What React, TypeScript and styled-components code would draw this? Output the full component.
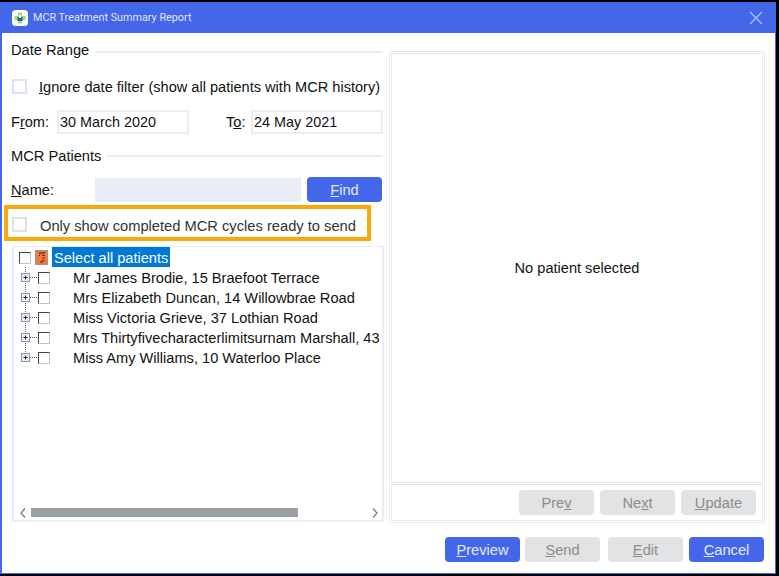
import * as React from 'react'
import styled, { createGlobalStyle } from 'styled-components'

const GlobalStyle = createGlobalStyle`
  html, body {
    margin: 0;
    padding: 0;
    background: #000;
  }
  * {
    box-sizing: border-box;
  }
`

const BLUE = '#4467ea'
const FIELD_LINE = '#e8ecf6'
const PANEL_LINE = '#ebebeb'

const Screen = styled.div`
  width: 779px;
  height: 576px;
  padding: 2px 3px 2px 0;
  background: #000;
  font-family: 'Liberation Sans', Arial, sans-serif;
  font-size: 14.58px;
  color: #111;
`

const Dialog = styled.div`
  width: 776px;
  height: 572px;
  display: flex;
  flex-direction: column;
  background: #fff;
  border: solid ${BLUE};
  border-width: 0 1px 1px 2px;
`

const TitleBar = styled.header`
  height: 31px;
  flex: none;
  display: flex;
  align-items: center;
  gap: 5px;
  padding: 0 13px 0 10px;
  margin-right: -1px;
  background: ${BLUE};
  color: #dfe6fd;
  font-family: Roboto, sans-serif;
  font-size: 10.8px;

  > span {
    flex: 1;
  }
`

const Body = styled.div`
  flex: 1;
  min-height: 0;
  display: grid;
  grid-template-columns: 372px 376px;
  grid-template-rows: 490px 1fr;
  column-gap: 5px;
  padding-left: 10px;
`

const LeftColumn = styled.div`
  display: flex;
  flex-direction: column;
  min-width: 0;
`

const Legend = styled.div<{ $top: number; $line: number }>`
  height: 18px;
  margin-top: ${(p) => p.$top}px;
  margin-left: -1px;
  display: flex;
  align-items: center;
  gap: 6px;
  font-size: 14.67px;

  &::after {
    content: '';
    flex: 1;
    height: 2px;
    margin-top: ${(p) => p.$line}px;
    margin-right: 1px;
    background: ${PANEL_LINE};
  }
`

const CheckRow = styled.label`
  height: 18px;
  margin-top: 18px;
  display: flex;
  align-items: center;
  gap: 12px;
  white-space: nowrap;

  > span:last-child {
    padding-top: 2px;
  }
`

const Check = styled.span`
  width: 15px;
  height: 15px;
  flex: none;
  border: 2px solid #dbe1f5;
  background: #fff;
`

const DateRow = styled.div`
  height: 24px;
  margin-top: 15px;
  margin-left: -1px;
  display: grid;
  grid-template-columns: 46px 132px 37px 25px 132px;
  align-items: center;
`

const DateField = styled.div`
  height: 24px;
  display: flex;
  align-items: center;
  padding: 0 1px;
  border: 2px solid ${FIELD_LINE};
  font-size: 14.4px;
`

const NameRow = styled.div`
  height: 25px;
  margin-top: 12px;
  margin-left: -1px;
  display: flex;
  align-items: center;
`

const NameLabel = styled.span`
  width: 84px;
  flex: none;
`

const NameField = styled.div`
  width: 206px;
  height: 24px;
  flex: none;
  background: ${FIELD_LINE};
`

const Button = styled.button<{ $primary?: boolean }>`
  width: 75px;
  height: 25px;
  flex: none;
  padding: 0;
  border: 0;
  border-radius: 4px;
  background: ${(p) => (p.$primary ? BLUE : '#e2e3e5')};
  color: ${(p) => (p.$primary ? '#e4e9fb' : '#8b8b8b')};
  font-family: 'Liberation Sans', Arial, sans-serif;
  font-size: 14.67px;
`

const FindButton = styled(Button)`
  margin-left: 6px;
`

const Highlight = styled.div`
  width: 367px;
  height: 36px;
  margin-top: 3px;
  margin-left: -8px;
  padding-left: 4px;
  display: flex;
  align-items: center;
  gap: 13px;
  border: 4px solid #f7a90e;
  color: #333;
  font-size: 14.7px;
  white-space: nowrap;

  > span:last-child {
    padding-top: 5px;
  }
  > ${Check} {
    margin-top: 2px;
  }
`

const TreeBox = styled.div`
  height: 276px;
  margin-top: 5px;
  display: flex;
  flex-direction: column;
  border: 2px solid ${FIELD_LINE};
  border-top-width: 1px;
  overflow: hidden;
`

const TreeList = styled.div`
  flex: 1;
  min-height: 0;
  padding-left: 5px;
  overflow: hidden;
`

const TreeRow = styled.div`
  height: 20px;
  display: flex;
  align-items: center;
  white-space: nowrap;
`

const TreeCheck = styled.span`
  width: 12px;
  height: 12px;
  margin-top: 2px;
  flex: none;
  border: 1px solid;
  border-color: #444 #c4c4c4 #c4c4c4 #444;
  background: #fff;
`

const RootIcon = styled.svg`
  margin-left: 4px;
  flex: none;
`

const RootLabel = styled.span`
  height: 20px;
  margin-left: 4px;
  padding: 2px 2px 0;
  display: flex;
  align-items: center;
  background: #0078d7;
  color: #fff;
`

const PatientLabel = styled.span`
  margin-left: 23px;
  padding-top: 2px;
  font-size: 14.62px;
`

const ScrollBar = styled.div`
  height: 10px;
  margin-bottom: 2px;
  flex: none;
  padding: 0 4px 0 6px;
  display: flex;
  align-items: flex-start;
  justify-content: space-between;
`

const ScrollTrack = styled.div`
  flex: 1;
  height: 9px;
  margin: 0 74px 0 5px;
  background: #9aa1a6;
`

const RightPanel = styled.section`
  margin-top: 18px;
  padding: 1px;
  display: flex;
  flex-direction: column;
  gap: 1px;
  border: 1px solid ${PANEL_LINE};
`

const Preview = styled.div`
  flex: 1;
  display: flex;
  align-items: center;
  justify-content: center;
  padding-bottom: 1px;
  border: 1px solid ${PANEL_LINE};
`

const PagerBar = styled.div`
  height: 37px;
  flex: none;
  padding: 5px 6px 0 0;
  display: flex;
  justify-content: flex-end;
  gap: 6px;
  border: 1px solid ${PANEL_LINE};
`

const Footer = styled.footer`
  grid-column: 1 / -1;
  padding: 14px 1px 0 0;
  display: flex;
  justify-content: flex-end;
`

const FooterButton = styled(Button)<{ $gap?: number }>`
  margin-left: ${(p) => p.$gap ?? 0}px;
`

const AppIcon = () => (
  <svg width="16" height="16" viewBox="0 0 16 16">
    <rect width="16" height="16" rx="3.5" fill="#f8fbf6" />
    <path d="M6 2.5h4V6h3.500v4H10v3.500H6V10H2.500V6H6z" fill="#a5d392" />
    <rect x="5.500" y="7" width="5" height="4" fill="#1d6f7c" />
    <rect x="7" y="5" width="2" height="3" fill="#eef7ea" />
  </svg>
)

const CloseIcon = () => (
  <svg width="14" height="14" viewBox="0 0 14 14">
    <path d="M1 1l12 12M13 1L1 13" stroke="#b5c4f7" strokeWidth="1.200" fill="none" />
  </svg>
)

const Expander = ({ last }: { last?: boolean }) => (
  <svg width="19" height="20" viewBox="0 0 19 20" style={{ flex: 'none' }}>
    <path
      d={`M6.500 0V${last ? 10 : 20}M11 10.500h7`}
      stroke="#666"
      strokeDasharray="1 1"
      fill="none"
    />
    <rect x="2.500" y="6.500" width="8" height="8" fill="#eef0f8" stroke="#8a94a8" />
    <path d="M4.500 10.500h4M6.500 8.500v4" stroke="#223" fill="none" />
  </svg>
)

const Chevron = ({ right }: { right?: boolean }) => (
  <svg width="6" height="10" viewBox="0 0 6 10">
    <path d={right ? 'M1 0.500L5 5L1 9.500' : 'M5 0.500L1 5L5 9.500'} stroke="#777" strokeWidth="1.200" fill="none" />
  </svg>
)

const patients = [
  'Mr James Brodie, 15 Braefoot Terrace',
  'Mrs Elizabeth Duncan, 14 Willowbrae Road',
  'Miss Victoria Grieve, 37 Lothian Road',
  'Mrs Thirtyfivecharacterlimitsurnam Marshall, 43',
  'Miss Amy Williams, 10 Waterloo Place',
]

export default function App() {
  return (
    <Screen>
      <GlobalStyle />
      <Dialog>
        <TitleBar>
          <AppIcon />
          <span>MCR Treatment Summary Report</span>
          <CloseIcon />
        </TitleBar>
        <Body>
          <LeftColumn>
            <Legend $top={8} $line={3}>Date Range</Legend>
            <CheckRow>
              <Check />
              <span>
                <u>I</u>gnore date filter (show all patients with MCR history)
              </span>
            </CheckRow>
            <DateRow>
              <span>
                F<u>r</u>om:
              </span>
              <DateField>30 March 2020</DateField>
              <span />
              <span>
                T<u>o</u>:
              </span>
              <DateField>24 May 2021</DateField>
            </DateRow>
            <Legend $top={13} $line={-1}>MCR Patients</Legend>
            <NameRow>
              <NameLabel>
                <u>N</u>ame:
              </NameLabel>
              <NameField />
              <FindButton $primary>
                <u>F</u>ind
              </FindButton>
            </NameRow>
            <Highlight>
              <Check />
              <span>Only show completed MCR cycles ready to send</span>
            </Highlight>
            <TreeBox>
              <TreeList>
                <TreeRow>
                  <TreeCheck />
                  <RootIcon width="13" height="15" viewBox="0 0 13 15">
                    <rect x="0.500" y="0.500" width="12" height="14" fill="#f5763a" stroke="#9a9a9a" />
                    <path
                      d="M4 3h6M7.500 5.500h2M4 5.500h1M7.500 8h2M7.500 10.500h2M5 12h3"
                      stroke="#222"
                      fill="none"
                    />
                  </RootIcon>
                  <RootLabel>Select all patients</RootLabel>
                </TreeRow>
                {patients.map((name, i) => (
                  <TreeRow key={name}>
                    <Expander last={i === patients.length - 1} />
                    <TreeCheck />
                    <PatientLabel>{name}</PatientLabel>
                  </TreeRow>
                ))}
              </TreeList>
              <ScrollBar>
                <Chevron />
                <ScrollTrack />
                <Chevron right />
              </ScrollBar>
            </TreeBox>
          </LeftColumn>
          <RightPanel>
            <Preview>No patient selected</Preview>
            <PagerBar>
              <Button>
                Pre<u>v</u>
              </Button>
              <Button>
                Ne<u>x</u>t
              </Button>
              <Button>
                <u>U</u>pdate
              </Button>
            </PagerBar>
          </RightPanel>
          <Footer>
            <FooterButton $primary>
              <u>P</u>review
            </FooterButton>
            <FooterButton $gap={5}>
              <u>S</u>end
            </FooterButton>
            <FooterButton $gap={8}>
              <u>E</u>dit
            </FooterButton>
            <FooterButton $gap={6} $primary>
              <u>C</u>ancel
            </FooterButton>
          </Footer>
        </Body>
      </Dialog>
    </Screen>
  )
}
